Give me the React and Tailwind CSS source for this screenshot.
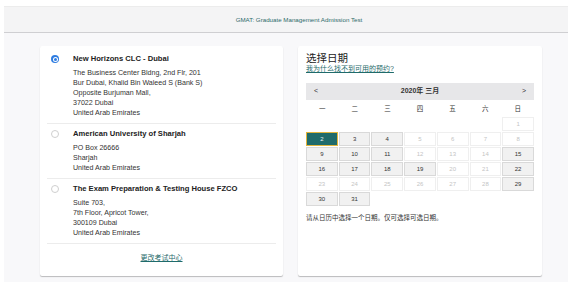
import React from "react";

const centers = [
  {
    name: "New Horizons CLC - Dubai",
    lines: [
      "The Business Center Bldng, 2nd Flr, 201",
      "Bur Dubai, Khalid Bin Waleed S (Bank S)",
      "Opposite Burjuman Mall,",
      "37022 Dubai",
      "United Arab Emirates",
    ],
    selected: true,
  },
  {
    name: "American University of Sharjah",
    lines: ["PO Box 26666", "Sharjah", "United Arab Emirates"],
  },
  {
    name: "The Exam Preparation & Testing House FZCO",
    lines: ["Suite 703,", "7th Floor, Apricot Tower,", "300109 Dubai", "United Arab Emirates"],
  },
];

const weekdays = ["一", "二", "三", "四", "五", "六", "日"];
const available = [3, 4, 9, 10, 11, 15, 16, 17, 18, 19, 22, 29, 30, 31];

const Radio = ({ checked }) =>
  checked ? (
    <span className="w-[8px] h-[8px] rounded-full bg-[#2f7de1] flex items-center justify-center">
      <span className="w-[5px] h-[5px] rounded-full bg-white flex items-center justify-center">
        <span className="w-[3px] h-[3px] rounded-full bg-[#2f7de1]" />
      </span>
    </span>
  ) : (
    <span className="w-[8px] h-[8px] rounded-full border border-[#cfcfcf] bg-white" />
  );

const DayCell = ({ day }) => {
  if (day === 2) {
    return (
      <div className="h-[14px] flex items-center justify-center bg-[#1f6b6b] border-[1.5px] border-[#e0b43c] text-[6px] text-[#e8f0ef]">
        2
      </div>
    );
  }
  const on = available.includes(day);
  return (
    <div
      className={
        on
          ? "h-[14px] flex items-center justify-center bg-[#f1f1f1] border border-[#d9d9d9] text-[6px] text-[#333]"
          : "h-[14px] flex items-center justify-center bg-white border border-[#efefef] text-[6px] text-[#c4c4c4]"
      }
    >
      {day}
    </div>
  );
};

export default function App() {
  const days = Array.from({ length: 31 }, (_, i) => i + 1);
  return (
    <div className="w-[568px] h-[289px] bg-white pt-[6px] pl-[4px] font-['Liberation_Sans','Noto_Sans_CJK_SC',sans-serif]">
      <div className="h-[276px] bg-[#f8f8fa]">
        {/* Header */}
        <div className="h-[27px] bg-[#f4f4f5] border-t border-[#ececec] border-b border-b-[#cfcfd2] flex items-center justify-center pl-[26px]">
          <span className="text-[6.2px] text-[#2d6a6a]">GMAT: Graduate Management Admission Test</span>
        </div>

        <div className="flex gap-[15px] pl-[36px] pr-[26px] pt-[13px]">
          {/* Test centers */}
          <div className="w-[243px] h-[230px] bg-white rounded-[2px] shadow-[0_1px_1px_rgba(0,0,0,0.25)] px-[7px] flex flex-col">
            {centers.map((c, i) => (
              <div key={i} className="flex gap-[14px] px-[4px] pt-[5px] pb-[5px] border-b border-[#ececec] first:pt-[8px]">
                <div className="w-[8px] h-[10px] flex items-center shrink-0">
                  <Radio checked={c.selected} />
                </div>
                <div className="flex flex-col gap-[4px]">
                  <p className="text-[7.6px] leading-[10px] font-bold text-[#222]">{c.name}</p>
                  <div className="text-[7.1px] leading-[10px] text-[#333]">
                    {c.lines.map((l, j) => (
                      <p key={j}>{l}</p>
                    ))}
                  </div>
                </div>
              </div>
            ))}
            <div className="mt-[9px] flex justify-center">
              <span className="text-[7px] leading-[10px] text-[#1f6b6b] underline">更改考试中心</span>
            </div>
          </div>

          {/* Date picker */}
          <div className="w-[244px] h-[230px] bg-white rounded-[2px] shadow-[0_1px_1px_rgba(0,0,0,0.25)] px-[8px] pt-[5px]">
            <p className="text-[10.5px] leading-[13px] text-[#222] font-['Noto_Sans_CJK_SC',sans-serif]">选择日期</p>
            <p className="text-[7px] leading-[10px] text-[#1f6b6b] underline">我为什么找不到可用的预约?</p>

            <div className="mt-[9px] h-[17px] bg-[#e7e7e9] flex items-center justify-between px-[8px] text-[7px] text-[#333]">
              <span>&lt;</span>
              <span className="font-bold">2020年 三月</span>
              <span>&gt;</span>
            </div>
            <div className="grid grid-cols-7 h-[17px] items-center text-[6.5px] text-[#333] text-center">
              {weekdays.map((w) => (
                <span key={w}>{w}</span>
              ))}
            </div>
            <div className="grid grid-cols-7 gap-[1px]">
              {Array.from({ length: 6 }).map((_, i) => (
                <div key={"e" + i} />
              ))}
              {days.map((d) => (
                <DayCell key={d} day={d} />
              ))}
            </div>
            <p className="mt-[7px] text-[6.5px] leading-[10px] text-[#333]">请从日历中选择一个日期。仅可选择可选日期。</p>
          </div>
        </div>
      </div>
    </div>
  );
}
